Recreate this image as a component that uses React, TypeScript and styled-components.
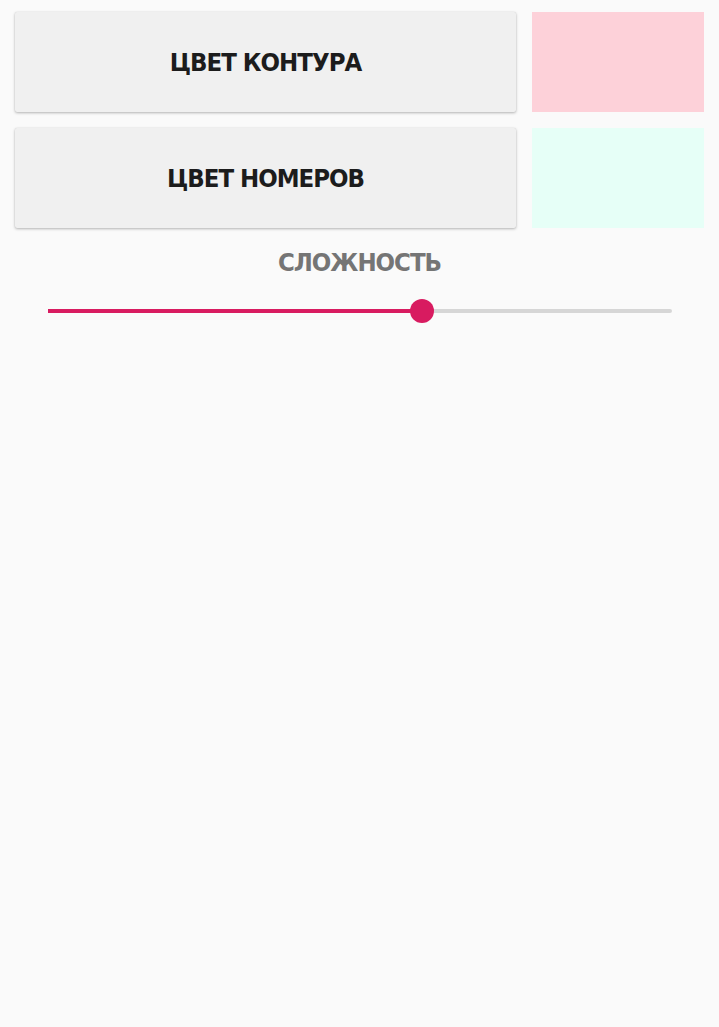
import React from "react";
import styled, { createGlobalStyle } from "styled-components";

const Global = createGlobalStyle`
  html, body { margin: 0; padding: 0; background: #fafafa; }
  body { font-family: "DejaVu Sans Condensed", "DejaVu Sans", sans-serif; }
`;

const Page = styled.div`
  min-height: 1027px;
  background: #fafafa;
  padding: 12px 15px 0 15px;
  box-sizing: border-box;
  display: flex;
  flex-direction: column;
`;

const Row = styled.div`
  display: flex;
  gap: 16px;
  height: 100px;
  margin-bottom: 16px;
`;

const ColorButton = styled.button`
  flex: 0 0 501px;
  height: 100px;
  border: none;
  border-radius: 2px;
  background: #f0f0f0;
  box-shadow: 0 1px 3px rgba(0, 0, 0, 0.28), 0 0 1px rgba(0, 0, 0, 0.12);
  font-family: "DejaVu Sans Condensed", "DejaVu Sans", sans-serif;
  font-weight: bold;
  font-size: 25.5px;
  letter-spacing: -1px;
  color: #1c1c1c;
  display: flex;
  align-items: center;
  justify-content: center;
  padding: 0;
`;

const Swatch = styled.div<{ $color: string }>`
  flex: 0 0 172px;
  height: 100px;
  background: ${(p) => p.$color};
`;

const Label = styled.div`
  text-align: center;
  font-family: "DejaVu Sans Condensed", "DejaVu Sans", sans-serif;
  font-weight: bold;
  font-size: 25.5px;
  letter-spacing: -1px;
  color: #757575;
  margin-top: 3px;
  height: 30px;
  line-height: 30px;
`;

const SliderWrap = styled.div`
  position: relative;
  margin: 22px 32px 0 33px;
  height: 24px;
  display: flex;
  align-items: center;
`;

const Track = styled.div`
  height: 4px;
  width: 100%;
  background: #d6d6d6;
  border-radius: 2px;
  position: relative;
`;

const Fill = styled.div`
  position: absolute;
  left: 0;
  top: 0;
  bottom: 0;
  background: #d81b60;
`;

const Thumb = styled.div`
  position: absolute;
  top: 50%;
  width: 24px;
  height: 24px;
  margin-left: -12px;
  margin-top: -12px;
  border-radius: 50%;
  background: #d81b60;
`;

export default function App() {
  const pct = ((422 - 48) / (672 - 48)) * 100;
  return (
    <>
      <Global />
      <Page>
        <Row>
          <ColorButton>ЦВЕТ КОНТУРА</ColorButton>
          <Swatch $color="#fdd1d9" />
        </Row>
        <Row>
          <ColorButton>ЦВЕТ НОМЕРОВ</ColorButton>
          <Swatch $color="#e6fff7" />
        </Row>
        <Label>СЛОЖНОСТЬ</Label>
        <SliderWrap>
          <Track>
            <Fill style={{ width: `${pct}%` }} />
          </Track>
          <Thumb style={{ left: `${pct}%` }} />
        </SliderWrap>
      </Page>
    </>
  );
}
